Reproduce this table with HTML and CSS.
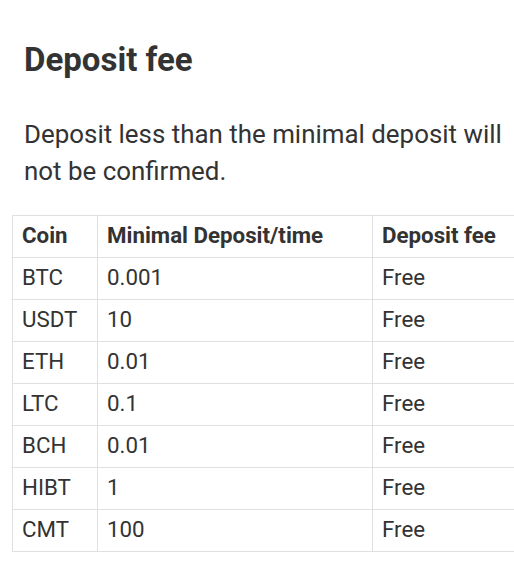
FILE: index.html
```html
<!DOCTYPE html>
<html lang="en">
<head>
<meta charset="utf-8">
<title>Deposit fee</title>
<link rel="stylesheet" href="styles.css">
</head>
<body>
<main class="page">
  <h2 class="title">Deposit fee</h2>
  <p class="note">Deposit less than the minimal deposit will not be confirmed.</p>
  <div class="table-wrap">
    <table class="fees">
      <colgroup>
        <col class="c1"><col class="c2"><col class="c3">
      </colgroup>
      <thead>
        <tr><th>Coin</th><th>Minimal Deposit/time</th><th>Deposit fee</th></tr>
      </thead>
      <tbody>
        <tr><td>BTC</td><td>0.001</td><td>Free</td></tr>
        <tr><td>USDT</td><td>10</td><td>Free</td></tr>
        <tr><td>ETH</td><td>0.01</td><td>Free</td></tr>
        <tr><td>LTC</td><td>0.1</td><td>Free</td></tr>
        <tr><td>BCH</td><td>0.01</td><td>Free</td></tr>
        <tr><td>HIBT</td><td>1</td><td>Free</td></tr>
        <tr><td>CMT</td><td>100</td><td>Free</td></tr>
      </tbody>
    </table>
  </div>
</main>
</body>
</html>
```

FILE: styles.css
```css
html, body {
  margin: 0;
  padding: 0;
  background: #fff;
  overflow: hidden;
}
body {
  font-family: Roboto, "Noto Sans", sans-serif;
  color: #333;
}
.page {
  padding: 0 0 0 12px;
}
.title {
  margin: 0;
  padding: 40px 12px 0;
  font-size: 33px;
  font-weight: 700;
  line-height: 40px;
}
.note {
  margin: 0;
  padding: 36px 0 0 12px;
  font-size: 25.9px;
  line-height: 37px;
}
.table-wrap {
  margin-top: 25px;
  width: 620px;
}
.fees {
  border-collapse: collapse;
  table-layout: fixed;
  width: 620px;
  font-size: 22.3px;
}
.c1 { width: 85px; }
.c2 { width: 275px; }
.c3 { width: 260px; }
.fees th,
.fees td {
  border: 1px solid #e0e0e0;
  padding: 7px 9px 10px;
  text-align: left;
  vertical-align: top;
  line-height: 24px;
}
.fees th {
  font-weight: 700;
}
.fees td {
  font-weight: 400;
}
```
